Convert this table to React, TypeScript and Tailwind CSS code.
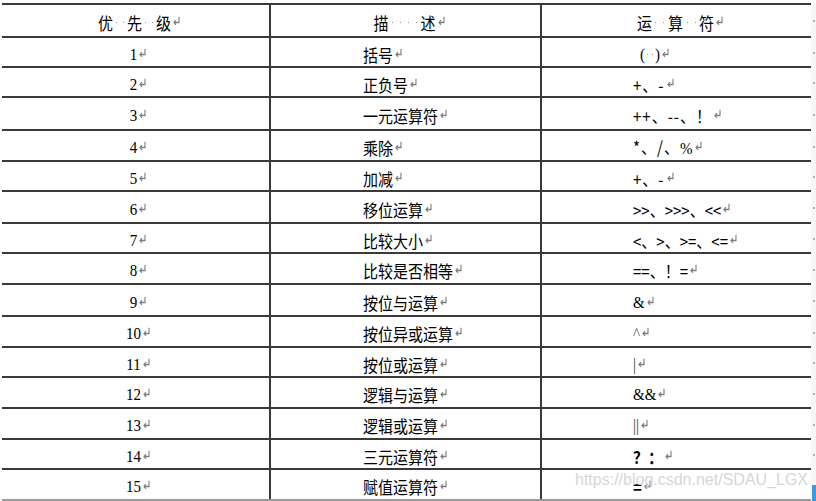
import React from "react";

const CJK = "font-['Noto_Sans_CJK_SC','Noto_Sans_CJK_JP',sans-serif]";
const SERIF = "font-['Liberation_Serif','Noto_Sans_CJK_SC',serif]";

function Mark() {
  return (
    <svg width="9" height="10" viewBox="0 0 9 10" className="ml-[1px] mb-[3px] shrink-0">
      <path d="M7 1.5 V6.5 H2" fill="none" stroke="#7c7c7c" strokeWidth="1.1" />
      <path d="M4 4.5 L2 6.5 L4 8.5" fill="none" stroke="#7c7c7c" strokeWidth="1.1" />
    </svg>
  );
}

function Dot({ w = "w-[7px]" }: { w?: string }) {
  return (
    <span className={`inline-flex ${w} justify-center items-center`}>
      <span className="block w-[1px] h-[1px] bg-[#9a9a9a]" />
    </span>
  );
}

function S({ children, className = "" }: { children: React.ReactNode; className?: string }) {
  return <span className={`inline-flex items-center scale-y-[1.15] ${className}`}>{children}</span>;
}

type Row = { n: string; d: string; op: React.ReactNode; h: string };

const rows: Row[] = [
  {
    n: "1",
    d: "括号",
    h: "h-[30px]",
    op: (
      <span className={`${SERIF} flex items-center pl-[7px]`}>
        (<Dot w="w-[5px]" />
        <Dot w="w-[5px]" />)
      </span>
    ),
  },
  { n: "2", d: "正负号", h: "h-[30px]", op: <span className={`${CJK} tracking-[1px]`}>+、-</span> },
  { n: "3", d: "一元运算符", h: "h-[33px]", op: <span className={`${CJK} tracking-[1px]`}>++、--、！</span> },
  {
    n: "4",
    d: "乘除",
    h: "h-[31px]",
    op: (
      <span className={`${CJK} tracking-[1px]`}>
        *、/、<span className={SERIF}>%</span>
      </span>
    ),
  },
  { n: "5", d: "加减", h: "h-[30px]", op: <span className={`${CJK} tracking-[1px]`}>+、-</span> },
  { n: "6", d: "移位运算", h: "h-[32px]", op: <span className={CJK}>&gt;&gt;、&gt;&gt;&gt;、&lt;&lt;</span> },
  { n: "7", d: "比较大小", h: "h-[30px]", op: <span className={CJK}>&lt;、&gt;、&gt;=、&lt;=</span> },
  { n: "8", d: "比较是否相等", h: "h-[31px]", op: <span className={CJK}>==、！=</span> },
  { n: "9", d: "按位与运算", h: "h-[32px]", op: <span className={SERIF}>&amp;</span> },
  { n: "10", d: "按位异或运算", h: "h-[31px]", op: <span className={`${SERIF} text-[#555]`}>^</span> },
  { n: "11", d: "按位或运算", h: "h-[30px]", op: <span className={`${SERIF} text-[#333]`}>|</span> },
  { n: "12", d: "逻辑与运算", h: "h-[31px]", op: <span className={SERIF}>&amp;&amp;</span> },
  { n: "13", d: "逻辑或运算", h: "h-[31px]", op: <span className={`${SERIF} text-[#333]`}>||</span> },
  { n: "14", d: "三元运算符", h: "h-[30px]", op: <span className={`${CJK} font-bold`}>？：</span> },
  { n: "15", d: "赋值运算符", h: "h-[31px]", op: <span className={`${CJK} font-bold`}>=</span> },
];

export default function App() {
  return (
    <div className="relative w-[816px] h-[501px] bg-white overflow-hidden text-black text-[15px] leading-none">
      <div className="pt-[3px] flex flex-col">
        {/* header */}
        <div className="flex">
          <div className="ml-[2px] w-[809px] flex border-t-2 border-b-2 border-[#3a3a3a] h-[35px]">
            <div className={`w-[269px] border-r-2 border-[#3a3a3a] flex items-center justify-center pl-[8px] pt-[4px] ${CJK}`}>
              <S>
                优<Dot />
                <Dot />先<Dot />
                <Dot />级<Mark />
              </S>
            </div>
            <div className={`w-[271px] border-r-2 border-[#3a3a3a] flex items-center justify-center pl-[8px] pt-[4px] ${CJK}`}>
              <S>
                描<Dot w="w-[8px]" />
                <Dot w="w-[8px]" />
                <Dot w="w-[8px]" />
                <Dot w="w-[8px]" />述<Mark />
              </S>
            </div>
            <div className={`flex-1 flex items-center justify-center pl-[8px] pt-[4px] ${CJK}`}>
              <S>
                运<Dot w="w-[8px]" />
                <Dot w="w-[8px]" />算<Dot w="w-[8px]" />
                <Dot w="w-[8px]" />符<Mark />
              </S>
            </div>
          </div>
          <div className="flex-1 flex items-center justify-center bg-[#f7f7f7]">
            <span className="block w-[2px] h-[2px] bg-[#b0b0b0]" />
          </div>
        </div>
        {rows.map((r, i) => (
          <div key={r.n} className={`flex ${r.h}`}>
            <div
              className={`ml-[2px] w-[809px] flex border-b-2 ${
                i === rows.length - 1 ? "border-[#9a9a9a]" : "border-[#3a3a3a]"
              }`}
            >
              <div className={`w-[269px] border-r-2 border-[#3a3a3a] flex items-center justify-center pl-[6px] pt-[4px] ${SERIF}`}>
                <S>
                  <span className="text-[15px]">{r.n}</span>
                  <Mark />
                </S>
              </div>
              <div className={`w-[271px] border-r-2 border-[#3a3a3a] flex items-center pl-[92px] pt-[4px] ${CJK}`}>
                <S>
                  {r.d}
                  <Mark />
                </S>
              </div>
              <div className="flex-1 flex items-center pl-[91px] pt-[4px]">
                <S>
                  {r.op}
                  <Mark />
                </S>
              </div>
            </div>
            <div className="flex-1 flex items-center justify-center bg-[#f7f7f7]">
              <span className="block w-[2px] h-[2px] bg-[#b0b0b0]" />
            </div>
          </div>
        ))}
      </div>
      <div className="absolute left-[575px] top-[471px] font-['Liberation_Sans',Arial,sans-serif] text-[16px] leading-[18px] text-[#d6d6d6] whitespace-nowrap">
        https://blog.csdn.net/SDAU_LGX
      </div>
      <div className="absolute right-0 bottom-0 w-[4px] h-[16px] bg-[#3d9be0]" />
    </div>
  );
}
